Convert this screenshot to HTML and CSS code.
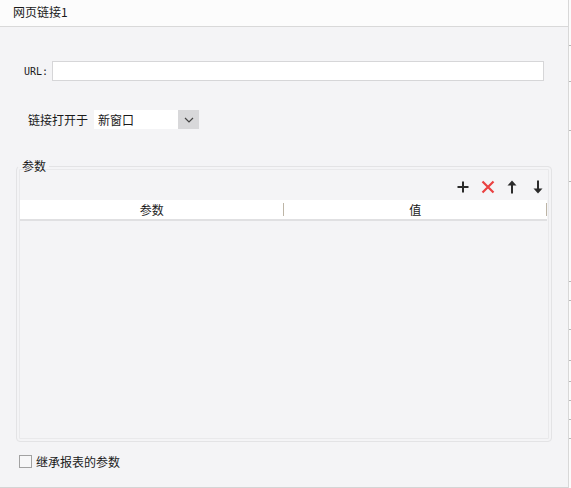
FILE: index.html
```html
<!DOCTYPE html>
<html lang="zh">

<head>
    <meta charset="UTF-8">
    <meta name="viewport" content="width=device-width, initial-scale=1.0">
    <title>网页链接</title>
    <link rel="stylesheet" href="styles.css">
</head>

<body>
    <div class="screen">
        <div class="dialog">
            <div class="title-bar">网页链接1</div>
            <div class="content">
                <div class="url-row">
                    <span class="url-label">URL:</span>
                    <div class="text-input"></div>
                </div>
                <div class="open-row">
                    <span class="open-label">链接打开于</span>
                    <div class="select">
                        <span class="select-value">新窗口</span>
                        <span class="select-arrow">
                            <svg width="10" height="6" viewBox="0 0 10 6">
                                <path d="M1 1 L5 5 L9 1" fill="none" stroke="#444" stroke-width="1.2" />
                            </svg>
                        </span>
                    </div>
                </div>
                <fieldset class="group">
                    <legend>参数</legend>
                    <div class="toolbar">
                        <svg class="tool add" width="12" height="12" viewBox="0 0 12 12">
                            <path d="M6 0.5 V11.5 M0.5 6 H11.5" stroke="#2b2b2b" stroke-width="2" />
                        </svg>
                        <svg class="tool remove" width="14" height="14" viewBox="0 0 14 14">
                            <path d="M1.5 1.5 L12.5 12.5 M12.5 1.5 L1.5 12.5" stroke="#ea4141" stroke-width="2.2" />
                        </svg>
                        <svg class="tool up" width="12" height="14" viewBox="0 0 12 14">
                            <path d="M6 4 V13.5" stroke="#2b2b2b" stroke-width="2" />
                            <path d="M6 0.5 L10.5 5.5 H1.5 Z" fill="#2b2b2b" />
                        </svg>
                        <svg class="tool down" width="12" height="14" viewBox="0 0 12 14">
                            <path d="M6 0.5 V10" stroke="#2b2b2b" stroke-width="2" />
                            <path d="M6 13.5 L10.5 8.5 H1.5 Z" fill="#2b2b2b" />
                        </svg>
                    </div>
                    <div class="table">
                        <div class="table-head">
                            <div class="col">参数</div>
                            <div class="col">值</div>
                        </div>
                        <div class="table-body"></div>
                    </div>
                </fieldset>
                <label class="check-row">
                    <span class="checkbox"></span>
                    <span>继承报表的参数</span>
                </label>
            </div>
        </div>
        <div class="ruler"></div>
    </div>
</body>

</html>
```

FILE: styles.css
```css
body {
    margin: 0;
    font-family: "Noto Sans CJK SC", "Noto Sans", sans-serif;
    font-size: 12px;
    color: #1a1a1a;
    background: #ffffff;
}

.screen {
    display: flex;
    height: 488px;
}

.dialog {
    width: 568px;
    height: 487px;
    background: #f4f4f6;
    border-right: 1px solid #d8d8d8;
    border-bottom: 1px solid #d4d4d4;
    display: flex;
    flex-direction: column;
}

.ruler {
    flex: 1;
    background:
        linear-gradient(#b8b8b8, #b8b8b8) 0 45px / 3px 1px no-repeat,
        linear-gradient(#b8b8b8, #b8b8b8) 0 81px / 3px 1px no-repeat,
        linear-gradient(#b8b8b8, #b8b8b8) 0 130px / 3px 1px no-repeat,
        linear-gradient(#b8b8b8, #b8b8b8) 0 181px / 3px 1px no-repeat,
        linear-gradient(#b8b8b8, #b8b8b8) 0 281px / 3px 1px no-repeat,
        linear-gradient(#b8b8b8, #b8b8b8) 0 300px / 3px 1px no-repeat,
        linear-gradient(#b8b8b8, #b8b8b8) 0 329px / 3px 1px no-repeat,
        linear-gradient(#b8b8b8, #b8b8b8) 0 360px / 3px 1px no-repeat,
        linear-gradient(#b8b8b8, #b8b8b8) 0 381px / 3px 1px no-repeat,
        linear-gradient(#b8b8b8, #b8b8b8) 0 400px / 3px 1px no-repeat,
        linear-gradient(#b8b8b8, #b8b8b8) 0 419px / 3px 1px no-repeat,
        linear-gradient(#b8b8b8, #b8b8b8) 0 438px / 3px 1px no-repeat,
        #fbfbfb;
}

.title-bar {
    height: 27px;
    line-height: 24px;
    padding-left: 13px;
    background: #fcfcfc;
    border-bottom: 1px solid #d9d9d9;
    box-sizing: border-box;
}

.content {
    flex: 1;
    display: flex;
    flex-direction: column;
    padding: 34px 0 0 16px;
}

.url-row {
    display: flex;
    align-items: center;
    padding-left: 8px;
}

.url-label {
    width: 28px;
    font-family: "DejaVu Sans Mono", "Liberation Mono", monospace;
    font-size: 10px;
}

.text-input {
    width: 490px;
    height: 18px;
    background: #ffffff;
    border: 1px solid #d6d6d8;
}

.open-row {
    display: flex;
    align-items: center;
    margin-top: 29px;
    padding-left: 12px;
}

.open-label {
    width: 66px;
    font-size: 12px;
}

.select {
    display: flex;
    width: 105px;
    height: 19px;
    background: #ffffff;
}

.select-value {
    flex: 1;
    padding-left: 4px;
    line-height: 19px;
    font-size: 12px;
}

.select-arrow {
    width: 21px;
    background: #d8d8da;
    display: flex;
    align-items: center;
    justify-content: center;
}

.group {
    margin: 30px 0 0 0;
    width: 536px;
    height: 283px;
    box-sizing: border-box;
    padding: 0 4px 3px 3px;
    border: 1px solid #e3e3e5;
    border-radius: 4px;
    box-shadow: inset 0 0 0 2px #f4f4f6, inset 0 0 0 3px #e9e9eb;
    display: flex;
    flex-direction: column;
}

.group legend {
    margin-left: -2px;
    padding: 0 3px 0 4px;
    line-height: 14px;
}

.toolbar {
    display: flex;
    justify-content: flex-end;
    align-items: center;
    height: 26px;
    padding: 2px 3px 0 0;
    box-sizing: border-box;
}

.remove {
    margin-left: 12px;
}

.up {
    margin-left: 11px;
}

.down {
    margin-left: 14px;
}

.table {
    flex: 1;
    display: flex;
    flex-direction: column;
    margin-top: 1px;
}

.table-head {
    display: flex;
    height: 19px;
    background: #ffffff;
    border-bottom: 2px solid #e0e0e2;
}

.col {
    flex: 1;
    text-align: center;
    line-height: 19px;
    position: relative;
}

.col::after {
    content: "";
    position: absolute;
    right: 0;
    top: 3px;
    width: 1px;
    height: 13px;
    background: #bdb5a6;
}

.table-body {
    flex: 1;
}

.check-row {
    display: flex;
    align-items: center;
    gap: 4px;
    margin-top: 11px;
    padding-left: 3px;
    font-size: 12px;
}

.checkbox {
    width: 11px;
    height: 11px;
    border: 1px solid #a2a2a2;
    background: #f7f7f8;
}
```
